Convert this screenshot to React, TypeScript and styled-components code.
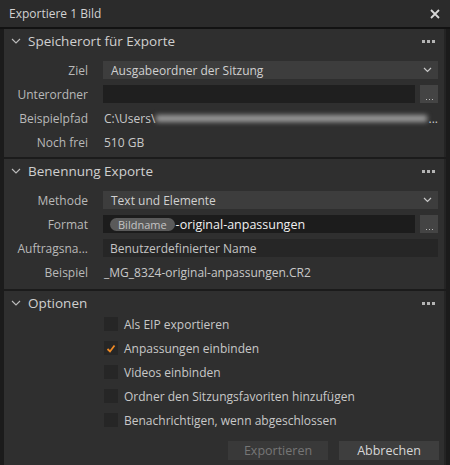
import styled, {createGlobalStyle} from "styled-components";

const GlobalStyle = createGlobalStyle`
  html, body {
    margin: 0;
    padding: 0;
    background: #2a2a2a;
  }
  body {
    font-family: "Open Sans", "Noto Sans", sans-serif;
    font-size: 12px;
    color: #c6c6c6;
  }
`;

const Window = styled.div`
  width: 450px;
  height: 465px;
  background: #262626;
  display: flex;
  flex-direction: column;
  overflow: hidden;
`;

const TitleBar = styled.div`
  height: 27px;
  display: flex;
  align-items: center;
  justify-content: space-between;
  padding: 0 9px;
  background: #2b2b2b;
  border-bottom: 2px solid #121212;
  color: #d2d2d2;
  font-size: 12px;
`;

const CloseIcon = styled.svg`
  width: 10px;
  height: 10px;
  margin-right: 1px;
`;

const Body = styled.div`
  flex: 1;
  display: flex;
  flex-direction: column;
  gap: 2px;
  background: #1b1b1b;
  padding: 0 4px 0 4px;
`;

const Section = styled.section<{$grow?: boolean}>`
  background: #2f2f2f;
  display: flex;
  flex-direction: column;
  flex: ${p => (p.$grow ? 1 : "none")};
  border-right: 2px solid #242424;
`;

const Header = styled.div`
  height: 24px;
  display: flex;
  align-items: center;
  padding: 0 8px 0 7px;
  font-size: 13.5px;
  color: #cfcfcf;
`;

const HeaderTitle = styled.span`
  flex: 1;
  margin-left: 7px;
`;

const Chevron = styled.svg`
  width: 10px;
  height: 6px;
`;

const Dots = styled.div`
  display: flex;
  gap: 2px;
  margin-right: 1px;
  & > span {
    width: 3px;
    height: 3px;
    background: #b4b4b4;
  }
`;

const Rows = styled.div<{$top: number; $bottom: number}>`
  display: flex;
  flex-direction: column;
  gap: 6px;
  padding: ${p => p.$top}px 6px ${p => p.$bottom}px 0;
`;

const Row = styled.div`
  display: flex;
  align-items: center;
  height: 18px;
`;

const Label = styled.div`
  width: 84px;
  text-align: right;
  padding-right: 15px;
  color: #b9b9b9;
  white-space: nowrap;
  overflow: hidden;
`;

const Select = styled.div`
  flex: 1;
  height: 18px;
  background: #3d3d3d;
  display: flex;
  align-items: center;
  justify-content: space-between;
  padding: 0 6px 0 8px;
  color: #d0d0d0;
`;

const Field = styled.div<{$bg?: string}>`
  flex: 1;
  height: 18px;
  background: ${p => p.$bg ?? "#1f1f1f"};
  display: flex;
  align-items: center;
  padding: 0 7px;
  color: #c4c4c4;
`;

const MoreButton = styled.div`
  width: 18px;
  height: 18px;
  margin-left: 5px;
  background: #444;
  display: flex;
  align-items: flex-end;
  justify-content: center;
  padding-bottom: 3px;
  box-sizing: border-box;
  gap: 2px;
  & > span {
    width: 1px;
    height: 1px;
    background: #bbb;
  }
`;

const Value = styled.div`
  flex: 1;
  display: flex;
  align-items: center;
  padding-left: 1px;
  color: #c8c8c8;
  white-space: nowrap;
`;

const Blur = styled.span`
  flex: 1;
  height: 7px;
  margin: 0 2px 0 1px;
  background: #9c9c9c;
  filter: blur(2.5px);
`;

const Pill = styled.span`
  background: #5a5a5a;
  border-radius: 7px;
  padding: 0 8px;
  height: 13px;
  line-height: 13px;
  font-size: 11px;
  color: #c4c4c4;
`;

const FormatText = styled.span`
  color: #f0f0f0;
  font-size: 12.5px;
  margin-left: 1px;
`;

const Options = styled.div`
  display: flex;
  flex-direction: column;
  gap: 10px;
  padding: 2px 0 0 100px;
`;

const CheckRow = styled.label`
  display: flex;
  align-items: center;
  gap: 6px;
  height: 14px;
  color: #c8c8c8;
`;

const Box = styled.span`
  width: 14px;
  height: 14px;
  background: #262626;
  display: flex;
  align-items: center;
  justify-content: center;
`;

const Footer = styled.div`
  display: flex;
  justify-content: flex-end;
  gap: 11px;
  padding: 14px 5px 0 0;
`;

const Button = styled.div<{$disabled?: boolean}>`
  width: 100px;
  height: 19px;
  background: ${p => (p.$disabled ? "#393939" : "#3e3e3e")};
  color: ${p => (p.$disabled ? "#767676" : "#d6d6d6")};
  display: flex;
  align-items: center;
  justify-content: center;
  font-size: 12.5px;
`;

function SectionHeader({title}: {title: string}) {
	return (
		<Header>
			<Chevron viewBox="0 0 10 6">
				<path d="M1 1 L5 5 L9 1" fill="none" stroke="#bdbdbd" strokeWidth="1.1" />
			</Chevron>
			<HeaderTitle>{title}</HeaderTitle>
			<Dots><span /><span /><span /></Dots>
		</Header>
	);
}

function DropArrow() {
	return (
		<svg width="9" height="6" viewBox="0 0 9 6">
			<path d="M1 1 L4.5 4.5 L8 1" fill="none" stroke="#c8c8c8" strokeWidth="1.2" />
		</svg>
	);
}

function More() {
	return <MoreButton><span /><span /><span /></MoreButton>;
}

const options = [
	{label: "Als EIP exportieren", checked: false},
	{label: "Anpassungen einbinden", checked: true},
	{label: "Videos einbinden", checked: false},
	{label: "Ordner den Sitzungsfavoriten hinzufügen", checked: false},
	{label: "Benachrichtigen, wenn abgeschlossen", checked: false},
];

export default function App() {
	return (
		<>
			<GlobalStyle />
			<Window>
				<TitleBar>
					<span>Exportiere 1 Bild</span>
					<CloseIcon viewBox="0 0 10 10">
						<path d="M1 1 L9 9 M9 1 L1 9" stroke="#d8d8d8" strokeWidth="1.8" />
					</CloseIcon>
				</TitleBar>
				<Body>
					<Section>
						<SectionHeader title="Speicherort für Exporte" />
						<Rows $top={8} $bottom={6}>
							<Row>
								<Label>Ziel</Label>
								<Select>Ausgabeordner der Sitzung<DropArrow /></Select>
							</Row>
							<Row>
								<Label>Unterordner</Label>
								<Field />
								<More />
							</Row>
							<Row>
								<Label>Beispielpfad</Label>
								<Value>C:\Users\<Blur />...</Value>
							</Row>
							<Row>
								<Label>Noch frei</Label>
								<Value>510 GB</Value>
							</Row>
						</Rows>
					</Section>
					<Section>
						<SectionHeader title="Benennung Exporte" />
						<Rows $top={8} $bottom={8}>
							<Row>
								<Label>Methode</Label>
								<Select>Text und Elemente<DropArrow /></Select>
							</Row>
							<Row>
								<Label>Format</Label>
								<Field $bg="#1c1c1c">
									<Pill>Bildname</Pill>
									<FormatText>-original-anpassungen</FormatText>
								</Field>
								<More />
							</Row>
							<Row>
								<Label>Auftragsna...</Label>
								<Field $bg="#262626">Benutzerdefinierter Name</Field>
							</Row>
							<Row>
								<Label>Beispiel</Label>
								<Value>_MG_8324-original-anpassungen.CR2</Value>
							</Row>
						</Rows>
					</Section>
					<Section $grow>
						<SectionHeader title="Optionen" />
						<Options>
							{options.map(o => (
								<CheckRow key={o.label}>
									<Box>
										{o.checked && (
											<svg width="10" height="9" viewBox="0 0 10 9">
												<path d="M1.5 5 L4 7.5 L8.5 1.5" fill="none" stroke="#f08a24" strokeWidth="1.8" />
											</svg>
										)}
									</Box>
									{o.label}
								</CheckRow>
							))}
						</Options>
						<Footer>
							<Button $disabled>Exportieren</Button>
							<Button>Abbrechen</Button>
						</Footer>
					</Section>
				</Body>
			</Window>
		</>
	);
}
